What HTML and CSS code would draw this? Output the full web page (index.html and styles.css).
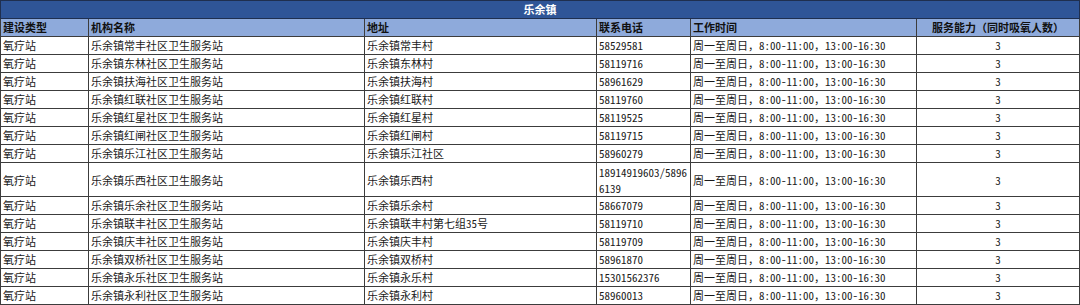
FILE: index.html
```html
<!DOCTYPE html>
<html lang="zh-CN">
<head>
<meta charset="utf-8">
<title>乐余镇</title>
<link rel="stylesheet" href="styles.css">
</head>
<body>
<table class="sheet">
  <colgroup>
    <col class="c-type">
    <col class="c-name">
    <col class="c-addr">
    <col class="c-tel">
    <col class="c-time">
    <col class="c-cap">
  </colgroup>
  <thead>
    <tr class="title-row"><th colspan="6">乐余镇</th></tr>
    <tr class="head-row">
      <th>建设类型</th>
      <th>机构名称</th>
      <th>地址</th>
      <th>联系电话</th>
      <th>工作时间</th>
      <th class="center">服务能力（同时吸氧人数）</th>
    </tr>
  </thead>
  <tbody>
    <tr><td>氧疗站</td><td>乐余镇常丰社区卫生服务站</td><td>乐余镇常丰村</td><td class="tel">58529581</td><td>周一至周日，8:00-11:00，13:00-16:30</td><td class="center">3</td></tr>
    <tr><td>氧疗站</td><td>乐余镇东林社区卫生服务站</td><td>乐余镇东林村</td><td class="tel">58119716</td><td>周一至周日，8:00-11:00，13:00-16:30</td><td class="center">3</td></tr>
    <tr><td>氧疗站</td><td>乐余镇扶海社区卫生服务站</td><td>乐余镇扶海村</td><td class="tel">58961629</td><td>周一至周日，8:00-11:00，13:00-16:30</td><td class="center">3</td></tr>
    <tr><td>氧疗站</td><td>乐余镇红联社区卫生服务站</td><td>乐余镇红联村</td><td class="tel">58119760</td><td>周一至周日，8:00-11:00，13:00-16:30</td><td class="center">3</td></tr>
    <tr><td>氧疗站</td><td>乐余镇红星社区卫生服务站</td><td>乐余镇红星村</td><td class="tel">58119525</td><td>周一至周日，8:00-11:00，13:00-16:30</td><td class="center">3</td></tr>
    <tr><td>氧疗站</td><td>乐余镇红闸社区卫生服务站</td><td>乐余镇红闸村</td><td class="tel">58119715</td><td>周一至周日，8:00-11:00，13:00-16:30</td><td class="center">3</td></tr>
    <tr><td>氧疗站</td><td>乐余镇乐江社区卫生服务站</td><td>乐余镇乐江社区</td><td class="tel">58960279</td><td>周一至周日，8:00-11:00，13:00-16:30</td><td class="center">3</td></tr>
    <tr class="tall"><td>氧疗站</td><td>乐余镇乐西社区卫生服务站</td><td>乐余镇乐西村</td><td class="tel">18914919603/58966139</td><td>周一至周日，8:00-11:00，13:00-16:30</td><td class="center">3</td></tr>
    <tr><td>氧疗站</td><td>乐余镇乐余社区卫生服务站</td><td>乐余镇乐余村</td><td class="tel">58667079</td><td>周一至周日，8:00-11:00，13:00-16:30</td><td class="center">3</td></tr>
    <tr><td>氧疗站</td><td>乐余镇联丰社区卫生服务站</td><td>乐余镇联丰村第七组35号</td><td class="tel">58119710</td><td>周一至周日，8:00-11:00，13:00-16:30</td><td class="center">3</td></tr>
    <tr><td>氧疗站</td><td>乐余镇庆丰社区卫生服务站</td><td>乐余镇庆丰村</td><td class="tel">58119709</td><td>周一至周日，8:00-11:00，13:00-16:30</td><td class="center">3</td></tr>
    <tr><td>氧疗站</td><td>乐余镇双桥社区卫生服务站</td><td>乐余镇双桥村</td><td class="tel">58961870</td><td>周一至周日，8:00-11:00，13:00-16:30</td><td class="center">3</td></tr>
    <tr><td>氧疗站</td><td>乐余镇永乐社区卫生服务站</td><td>乐余镇永乐村</td><td class="tel">15301562376</td><td>周一至周日，8:00-11:00，13:00-16:30</td><td class="center">3</td></tr>
    <tr><td>氧疗站</td><td>乐余镇永利社区卫生服务站</td><td>乐余镇永利村</td><td class="tel">58960013</td><td>周一至周日，8:00-11:00，13:00-16:30</td><td class="center">3</td></tr>
  </tbody>
</table>
</body>
</html>
```

FILE: styles.css
```css
html, body {
  margin: 0;
  padding: 0;
  background: #ffffff;
}

body {
  font-family: "Noto Sans Mono CJK SC", "Noto Sans CJK SC", "Liberation Sans", sans-serif;
  font-size: 11px;
  color: #1a1a1a;
}

.sheet {
  border-collapse: collapse;
  table-layout: fixed;
  width: 1079px;
}

.c-type { width: 88px; }
.c-name { width: 276px; }
.c-addr { width: 232px; }
.c-tel  { width: 94px; }
.c-time { width: 226px; }
.c-cap  { width: 163px; }

.sheet th,
.sheet td {
  border: 1px solid #3c3c3c;
  padding: 0 2px;
  height: 17px;
  line-height: 17px;
  text-align: left;
  vertical-align: middle;
  white-space: nowrap;
  overflow: hidden;
}

.title-row th {
  background: #2f5597;
  color: #ffffff;
  text-align: center;
  font-weight: bold;
  border-color: #1f2f4f;
}

.head-row th {
  background: #8eaadb;
  color: #111111;
  font-weight: bold;
}

.sheet .center {
  text-align: center;
}

.sheet td.tel {
  white-space: normal;
  word-break: break-all;
}

.sheet .tall td {
  height: 33px;
  line-height: 16px;
}
```
